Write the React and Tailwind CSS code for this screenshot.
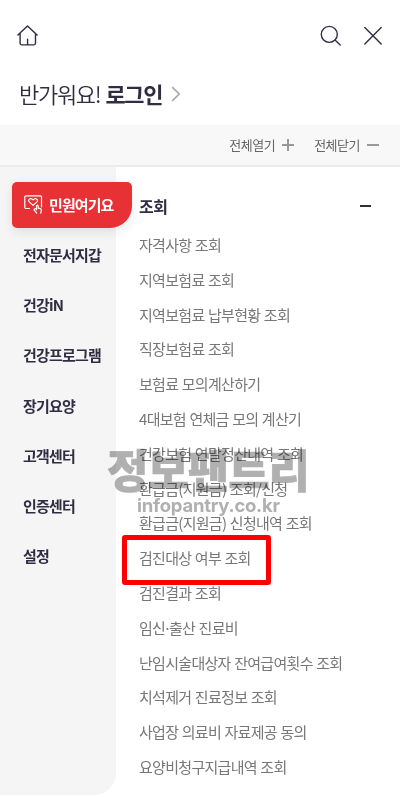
const tabs = ["전자문서지갑", "건강iN", "건강프로그램", "장기요양", "고객센터", "인증센터", "설정"];

const links = [
  "자격사항 조회",
  "지역보험료 조회",
  "지역보험료 납부현황 조회",
  "직장보험료 조회",
  "보험료 모의계산하기",
  "4대보험 연체금 모의 계산기",
  "건강보험 연말정산내역 조회",
  "환급금(지원금) 조회/신청",
  "환급금(지원금) 신청내역 조회",
  "검진대상 여부 조회",
  "검진결과 조회",
  "임신·출산 진료비",
  "난임시술대상자 잔여급여횟수 조회",
  "치석제거 진료정보 조회",
  "사업장 의료비 자료제공 동의",
  "요양비청구지급내역 조회",
];

function HeartTouchIcon() {
  return (
    <svg className="h-[20px] w-[20px]" viewBox="0 0 20 20" fill="none" stroke="white" strokeWidth="1.2" strokeLinecap="round" strokeLinejoin="round">
      <path d="M5.5 13.5H2A1.2 1.2 0 0 1 .8 12.3V2A1.2 1.2 0 0 1 2 .8H16.3A1.2 1.2 0 0 1 17.5 2V12" />
      <path d="M9.1 10.4L5.2 6.9C3.3 4.7 6.8 2 9.1 4.9C11.4 2 14.9 4.7 13 6.9L9.1 10.4" />
      <path d="M12.5 14.8V11C12.5 9.7 14.2 9.7 14.2 11V13.2L16.3 13.6C17.1 13.8 17.4 14.2 17.3 15L16.8 18.2M12.5 13.2L10.5 14.1C9.8 14.6 10.1 15.2 10.7 15.7L12.7 18.2" />
    </svg>
  );
}

export default function App() {
  return (
    <div className="relative h-[798px] w-[400px] overflow-hidden bg-white font-['Noto_Sans_CJK_KR',sans-serif] text-[#2f2d42]">
      {/* Top bar */}
      <header className="flex h-[72px] items-center pr-[17px] pl-[17px]">
        <svg className="h-[22px] w-[22px]" viewBox="0 0 22 22" fill="none" stroke="currentColor" strokeWidth="1.4" strokeLinecap="round" strokeLinejoin="round">
          <path d="M.9 10.1L10.5 1.1L20.1 10.1M3.1 8.5V18.1A1.8 1.8 0 0 0 4.9 19.9H16.7A1.8 1.8 0 0 0 18.5 18.1V8.5M10.6 14.2V19.6" />
        </svg>
        <svg className="mr-[21px] ml-auto h-[22px] w-[22px]" viewBox="0 0 22 22" fill="none" stroke="currentColor" strokeWidth="1.4" strokeLinecap="round">
          <circle cx="9.3" cy="9.4" r="8" />
          <path d="M15 15.1L20.2 20" />
        </svg>
        <svg className="h-[20px] w-[20px]" viewBox="0 0 20 20" fill="none" stroke="currentColor" strokeWidth="1.4" strokeLinecap="round">
          <path d="M1.8 1.5L18.2 18M18.2 1.5L1.8 18" />
        </svg>
      </header>

      {/* Greeting */}
      <div className="flex h-[53px] items-start pl-[19px] text-[22px] leading-[42px] tracking-[-1.3px]">
        <span className="font-[350]">반가워요!</span>
        <strong className="ml-[5px] font-bold">로그인</strong>
        <svg className="mt-[14px] ml-[9px] h-[16px] w-[10px]" viewBox="0 0 10 16" fill="none" stroke="#aaa" strokeWidth="1.7">
          <path d="M1.2 1.2L8.2 8L1.2 14.8" />
        </svg>
      </div>

      {/* Expand / collapse */}
      <div className="flex h-[42px] items-center justify-end border-b-2 border-[#ececec] bg-[#f8f8f8] pr-[21px] text-[13px] tracking-[-0.5px] text-[#666]">
        <span>전체열기</span>
        <svg className="ml-[7px] h-3 w-3" viewBox="0 0 12 12" stroke="#999" strokeWidth="2">
          <path d="M0 6H12M6 0V12" />
        </svg>
        <span className="ml-[20px]">전체닫기</span>
        <svg className="ml-[7px] h-3 w-3" viewBox="0 0 12 12" stroke="#999" strokeWidth="2">
          <path d="M0 6H12" />
        </svg>
      </div>

      <div className="flex">
        {/* Categories */}
        <nav className="h-[628px] w-[116px] shrink-0 rounded-br-[22px] bg-[#f5f5f5] pt-[15px]">
          <div className="relative ml-[12px] flex h-[46px] w-[120px] items-center rounded-[5px] rounded-br-[22px] bg-[#e83135] pl-[12px] shadow-[0_4px_12px_rgba(0,0,0,0.09)]">
            <HeartTouchIcon />
            <span className="ml-[5px] text-[15px] font-bold tracking-[-0.9px] whitespace-nowrap text-white">민원여기요</span>
          </div>
          <ul className="mt-[2px] pl-[23px]">
            {tabs.map((tab) => (
              <li key={tab} className="h-[50.2px] text-[15px] leading-[50px] font-bold tracking-[-0.8px] whitespace-nowrap">
                {tab}
              </li>
            ))}
          </ul>
        </nav>

        {/* Links of the open category */}
        <section className="flex-1 pt-[18px] pl-[23px]">
          <div className="flex h-[43px] items-start justify-between pr-[29px]">
            <h2 className="text-[16px] leading-[42px] font-bold tracking-[-0.4px]">조회</h2>
            <span className="mt-[20px] h-[2px] w-[11px] bg-[#2f2d42]" />
          </div>
          <ul>
            {links.map((link) => (
              <li key={link} className="h-[34.8px] text-[15px] leading-[34.8px] tracking-[-0.7px] whitespace-nowrap text-[#777] [word-spacing:0.8px]">
                {link.split("·").map((part, i) => (
                  <span key={part}>
                    {i > 0 && <span className="-mx-[2px]">·</span>}
                    {part}
                  </span>
                ))}
              </li>
            ))}
          </ul>
        </section>
      </div>

      {/* Watermark over the list */}
      <div className="pointer-events-none absolute top-[442px] left-[107px] w-[210px] text-[#b0b0b0] mix-blend-multiply">
        <p className="h-[52px] text-[45px] leading-[54px] font-black tracking-[-1px] whitespace-nowrap [-webkit-text-stroke:0.6px_#b0b0b0]">정보팬트리</p>
        <p className="pl-[30px] font-['Inter','Noto_Sans_CJK_KR',sans-serif] text-[18.5px] leading-[23px] font-bold tracking-[-0.25px] whitespace-nowrap">infopantry.co.kr</p>
      </div>

      {/* Highlighted entry */}
      <div className="absolute top-[535px] left-[122px] h-[50px] w-[149px] rounded-[3px] border-5 border-[#f00]" />
    </div>
  );
}
